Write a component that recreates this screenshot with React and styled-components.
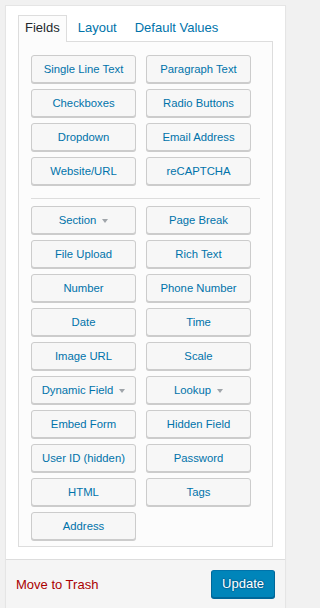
import React from 'react';
import styled, { createGlobalStyle } from 'styled-components';

const FIRST_GROUP = [
  { label: 'Single Line Text' },
  { label: 'Paragraph Text' },
  { label: 'Checkboxes' },
  { label: 'Radio Buttons' },
  { label: 'Dropdown' },
  { label: 'Email Address' },
  { label: 'Website/URL' },
  { label: 'reCAPTCHA' },
];

const SECOND_GROUP = [
  { label: 'Section', menu: true },
  { label: 'Page Break' },
  { label: 'File Upload' },
  { label: 'Rich Text' },
  { label: 'Number' },
  { label: 'Phone Number' },
  { label: 'Date' },
  { label: 'Time' },
  { label: 'Image URL' },
  { label: 'Scale' },
  { label: 'Dynamic Field', menu: true },
  { label: 'Lookup', menu: true },
  { label: 'Embed Form' },
  { label: 'Hidden Field' },
  { label: 'User ID (hidden)' },
  { label: 'Password' },
  { label: 'HTML' },
  { label: 'Tags' },
  { label: 'Address' },
];

const TABS = ['Fields', 'Layout', 'Default Values'];

const GlobalStyle = createGlobalStyle`
  html, body {
    margin: 0;
    padding: 0;
    background: #f1f1f1;
    font-family: "Liberation Sans", Arial, sans-serif;
  }
  * {
    box-sizing: border-box;
  }
`;

const Page = styled.div`
  width: 291px;
  padding: 5px 5px 0;
`;

const Card = styled.div`
  background: #fff;
  border: 1px solid #e5e5e5;
  box-shadow: 0 1px 1px rgba(0, 0, 0, .04);
`;

const Inside = styled.div`
  padding: 9px 12px 12px;
`;

const TabList = styled.div`
  display: flex;
  align-items: flex-end;
`;

const Tab = styled.div`
  position: relative;
  z-index: 1;
  height: 27px;
  margin-right: 4px;
  margin-bottom: -1px;
  padding: 2px 6px 0;
  font-size: 13px;
  line-height: 20px;
  border: 1px solid transparent;
  border-bottom: none;
  color: #0073aa;
  cursor: pointer;

  ${({ $active }) => $active && `
    color: #23282d;
    background: #fcfcfc;
    border-color: #ddd;
  `}
`;

const Panel = styled.div`
  border: 1px solid #ddd;
  background: #fcfcfc;
  padding: 13px 12px 6px;
`;

const FieldGrid = styled.div`
  display: grid;
  grid-template-columns: 105px 105px;
  column-gap: 10px;
  row-gap: 6px;
`;

const Divider = styled.hr`
  border: none;
  border-top: 1px solid #ddd;
  margin: 13px 0 7px;
  height: 0;
`;

const FieldButton = styled.button`
  display: flex;
  align-items: center;
  justify-content: center;
  gap: 6px;
  height: 28px;
  padding: 0 4px;
  font-family: inherit;
  font-size: 11.3px;
  color: #0073aa;
  background: #f7f7f7;
  border: 1px solid #ccc;
  border-radius: 3px;
  box-shadow: 0 1px 0 #ccc;
  white-space: nowrap;
  cursor: pointer;
`;

const Caret = styled.span`
  width: 0;
  height: 0;
  margin-top: 1px;
  border-left: 3.5px solid transparent;
  border-right: 3.5px solid transparent;
  border-top: 4px solid #a0a5aa;
`;

const Footer = styled.div`
  display: flex;
  justify-content: space-between;
  align-items: center;
  padding: 10px;
  background: #f5f5f5;
  border-top: 1px solid #ddd;
`;

const TrashLink = styled.a`
  color: #a00;
  font-size: 13px;
  text-decoration: none;
  cursor: pointer;
`;

const PrimaryButton = styled.button`
  height: 28px;
  padding: 0 10px;
  font-family: inherit;
  font-size: 13px;
  line-height: 26px;
  color: #fff;
  background: #0085ba;
  border: 1px solid #0073aa;
  border-color: #0073aa #006799 #006799;
  border-radius: 3px;
  box-shadow: 0 1px 0 #006799;
  text-shadow: 0 -1px 1px #006799, 1px 0 1px #006799, 0 1px 1px #006799, -1px 0 1px #006799;
  cursor: pointer;
`;

const FieldList = ({ items }) => (
  <FieldGrid>
    {items.map(item => (
      <FieldButton key={item.label}>
        {item.label}
        {item.menu && <Caret />}
      </FieldButton>
    ))}
  </FieldGrid>
);

const App = () => {
  const [tab, setTab] = React.useState('Fields');

  return (
    <Page>
      <GlobalStyle />
      <Card>
        <Inside>
          <TabList>
            {TABS.map(name => (
              <Tab key={name} $active={name === tab} onClick={() => setTab(name)}>
                {name}
              </Tab>
            ))}
          </TabList>
          <Panel>
            <FieldList items={FIRST_GROUP} />
            <Divider />
            <FieldList items={SECOND_GROUP} />
          </Panel>
        </Inside>
        <Footer>
          <TrashLink>Move to Trash</TrashLink>
          <PrimaryButton>Update</PrimaryButton>
        </Footer>
      </Card>
    </Page>
  );
};

export default App;
